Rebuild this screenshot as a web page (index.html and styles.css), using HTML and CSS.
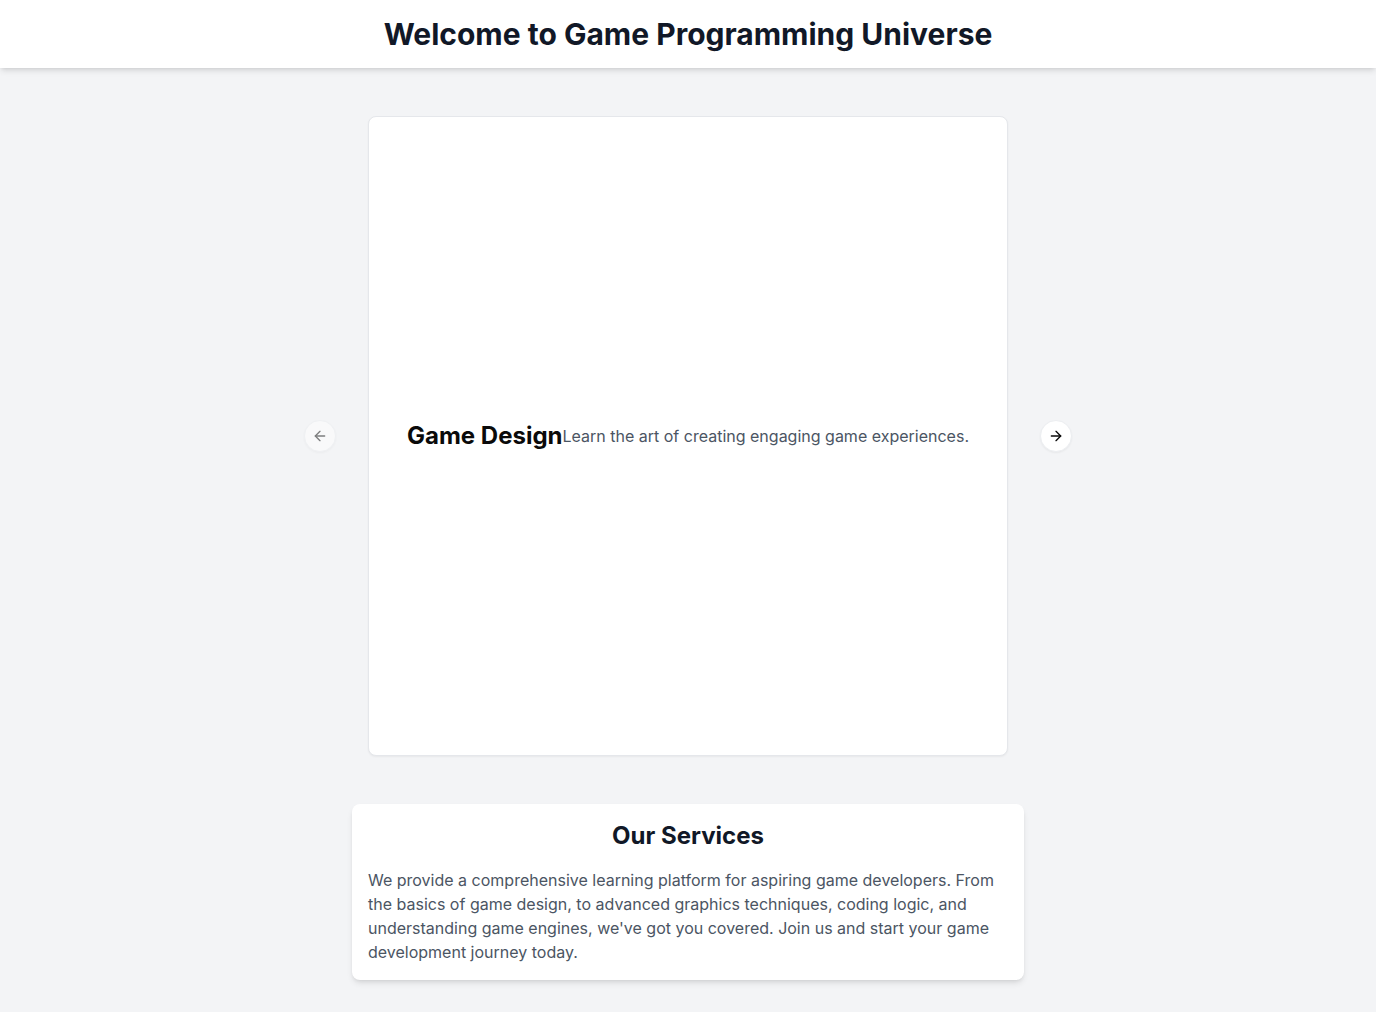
FILE: index.html
```html
<!DOCTYPE html>
<html>
<head>
<meta charset="utf-8">
<link rel="stylesheet" href="styles.css">
</head>
<body>
<header class="header">
  <h1 class="title">Welcome to Game Programming Universe</h1>
</header>
<main class="main">
  <section class="carousel">
    <div class="slide">
      <div class="slide-content">
        <h2 class="slide-title">Game Design</h2>
        <p class="slide-text">Learn the art of creating engaging game experiences.</p>
      </div>
    </div>
    <button class="nav nav-prev" disabled aria-label="Previous slide">
      <svg width="16" height="16" viewBox="0 0 24 24" fill="none" stroke="currentColor" stroke-width="2" stroke-linecap="round" stroke-linejoin="round"><path d="m12 19-7-7 7-7"/><path d="M19 12H5"/></svg>
    </button>
    <button class="nav nav-next" aria-label="Next slide">
      <svg width="16" height="16" viewBox="0 0 24 24" fill="none" stroke="currentColor" stroke-width="2" stroke-linecap="round" stroke-linejoin="round"><path d="M5 12h14"/><path d="m12 5 7 7-7 7"/></svg>
    </button>
  </section>
  <section class="services">
    <h2 class="services-title">Our Services</h2>
    <p class="services-text">We provide a comprehensive learning platform for aspiring game developers. From the basics of game design, to advanced graphics techniques, coding logic, and understanding game engines, we've got you covered. Join us and start your game development journey today.</p>
  </section>
</main>
</body>
</html>
```
FILE: styles.css
```css
* { box-sizing: border-box; }
html, body { margin: 0; padding: 0; }
body {
  font-family: Inter, "Noto Sans", sans-serif;
  background: #f3f4f6;
  color: #111827;
  min-height: 100vh;
}
.header {
  background: #fff;
  padding: 16px;
  box-shadow: 0 4px 6px -1px rgba(0,0,0,0.1), 0 2px 4px -2px rgba(0,0,0,0.1);
  text-align: center;
}
.title {
  margin: 0;
  font-size: 30px;
  line-height: 36px;
  font-weight: 700;
  color: #111827;
}
.main {
  display: flex;
  flex-direction: column;
  align-items: center;
  padding: 48px 16px;
  gap: 48px;
}
.carousel {
  position: relative;
  width: 640px;
}
.slide {
  width: 640px;
  height: 640px;
  background: #fff;
  border: 1px solid #e5e7eb;
  border-radius: 8px;
  box-shadow: 0 1px 2px 0 rgba(0,0,0,0.05);
  display: flex;
  align-items: center;
  justify-content: center;
  padding: 24px;
}
.slide-content {
  display: flex;
  align-items: center;
}
.slide-title {
  margin: 0;
  font-size: 24px;
  line-height: 32px;
  font-weight: 700;
  color: #0a0a0a;
}
.slide-text {
  margin: 0;
  font-size: 16px;
  line-height: 24px;
  color: #4b5563;
}
.nav {
  position: absolute;
  top: 50%;
  transform: translateY(-50%);
  width: 32px;
  height: 32px;
  border-radius: 50%;
  border: 1px solid #eceef1;
  background: #fff;
  display: flex;
  align-items: center;
  justify-content: center;
  padding: 0;
  color: #0a0a0a;
  box-shadow: 0 1px 2px 0 rgba(0,0,0,0.05);
  cursor: pointer;
}
.nav-prev { left: -64px; opacity: 0.5; }
.nav-next { right: -64px; }
.services {
  width: 672px;
  background: #fff;
  border-radius: 8px;
  box-shadow: 0 4px 6px -1px rgba(0,0,0,0.1), 0 2px 4px -2px rgba(0,0,0,0.1);
  padding: 16px;
}
.services-title {
  margin: 0 0 16px;
  text-align: center;
  font-size: 24px;
  line-height: 32px;
  font-weight: 700;
  color: #111827;
}
.services-text {
  margin: 0;
  font-size: 16px;
  line-height: 24px;
  color: #4b5563;
}
```
